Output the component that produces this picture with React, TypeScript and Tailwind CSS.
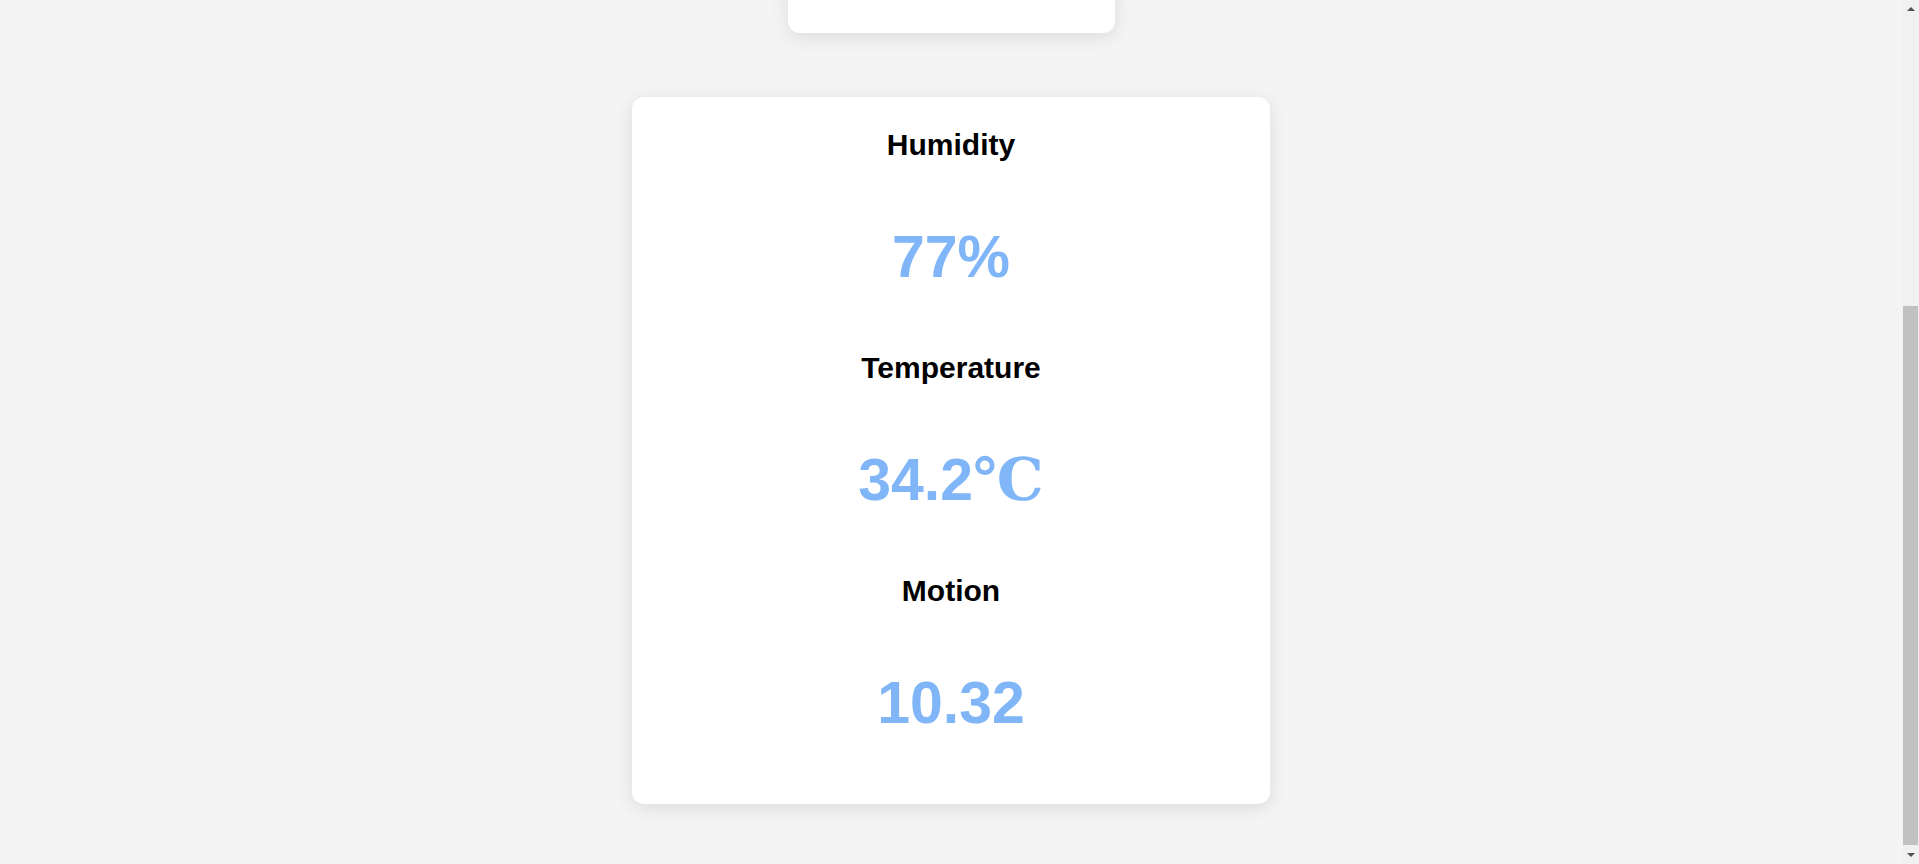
import { useEffect } from "react";

const readings = [
  { label: "Humidity", value: "77", unit: "%" },
  { label: "Temperature", value: "34.2", unit: "℃" },
  { label: "Motion", value: "10.32", unit: "" },
];

export default function App() {
  useEffect(() => {
    window.scrollTo(0, document.documentElement.scrollHeight);
  }, []);

  return (
    <div className="min-h-screen bg-[#f4f4f4] font-['Liberation_Sans',Arial,sans-serif] flex flex-col items-center pt-10 pb-[60px] pr-[17px]">
      {/* status card */}
      <div className="w-[327px] h-[462px] bg-white rounded-xl shadow-[0_4px_18px_rgba(0,0,0,0.1)]"></div>

      {/* sensor readings */}
      <div className="mt-16 w-[638px] bg-white rounded-xl shadow-[0_4px_18px_rgba(0,0,0,0.1)] pt-[31px] pb-[66px] flex flex-col items-center">
        {readings.map((r, i) => (
          <div key={r.label} className={`flex flex-col items-center ${i > 0 ? "mt-[59px]" : ""}`}>
            <h3 className="text-[30px] leading-[33px] font-bold text-black">{r.label}</h3>
            <p className="mt-[62px] text-[59px] leading-[69px] font-bold text-[#80b6f8]">
              {r.value}
              {r.unit === "℃" ? (
                <span className="font-['Liberation_Serif','DejaVu_Serif',serif]">℃</span>
              ) : (
                r.unit
              )}
            </p>
          </div>
        ))}
      </div>

      {/* page scrollbar */}
      <div className="fixed top-0 right-0 h-screen w-[17px] bg-[#f1f1f1] flex flex-col items-center">
        <div className="h-[17px] flex items-center justify-center">
          <div className="w-0 h-0 border-x-[4px] border-x-transparent border-b-[4px] border-b-[#505050]"></div>
        </div>
        <div className="mt-[289px] w-[15px] h-[539px] bg-[#c1c1c1]"></div>
        <div className="flex-1 flex items-center justify-center">
          <div className="w-0 h-0 border-x-[4px] border-x-transparent border-t-[4px] border-t-[#505050]"></div>
        </div>
      </div>
    </div>
  );
}
